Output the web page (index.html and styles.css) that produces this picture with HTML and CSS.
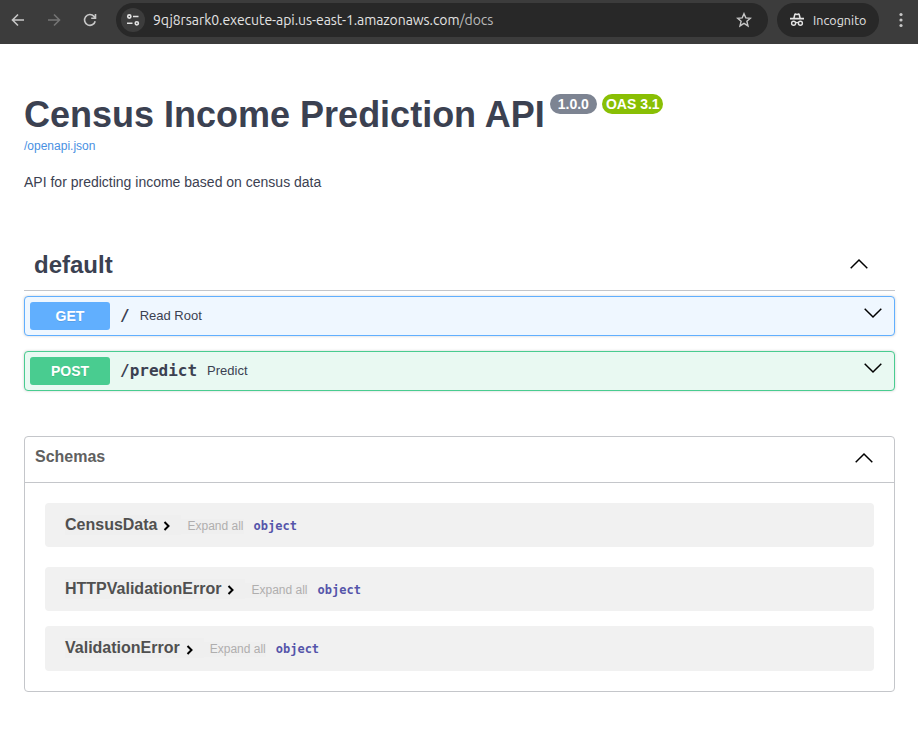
FILE: index.html
```html
<!DOCTYPE html>
<html lang="en">
<head>
<meta charset="utf-8">
<title>Census Income Prediction API</title>
<link rel="stylesheet" href="styles.css">
</head>
<body>
<header class="toolbar">
  <nav class="nav">
    <svg width="16" height="16" viewBox="0 0 16 16" class="stroke"><path d="M14 8H3M8 2.5L2.5 8L8 13.5"/></svg>
    <svg width="16" height="16" viewBox="0 0 16 16" class="stroke dim"><path d="M2 8H13M8 2.5L13.500 8L8 13.5"/></svg>
    <svg width="16" height="16" viewBox="0 0 16 16" class="stroke"><path d="M13.200 9.200A5.400 5.400 0 1 1 12 4.400L13.300 5.800M13.500 2V6.300H9.200"/></svg>
  </nav>
  <div class="address">
    <span class="site-info">
      <svg width="14" height="14" viewBox="0 0 14 14" class="stroke light"><circle cx="3.300" cy="3.500" r="1.600"/><path d="M7 3.500H12.500M1 10.300H6.500"/><circle cx="10.800" cy="10.300" r="1.600"/></svg>
    </span>
    <span class="url"><span class="host">9qj8rsark0.execute-api.us-east-1.amazonaws.com</span>/docs</span>
    <svg width="16" height="16" viewBox="0 0 16 16" class="star"><path d="M8 1.700L9.800 5.900L14.400 6.300L10.900 9.300L12 13.900L8 11.400L4 13.900L5.100 9.300L1.600 6.300L6.200 5.900Z"/></svg>
  </div>
  <div class="incognito">
    <svg width="16" height="16" viewBox="0 0 16 16"><path class="fill" d="M4.200 5.800L5.100 2.200Q5.500 1 6.700 1.300L8 1.700L9.300 1.300Q10.500 1 10.900 2.200L11.800 5.800H15V7.400H1V5.800Z"/><path class="hat" d="M5.800 5.800L6.500 2.900L8 3.300L9.500 2.900L10.200 5.800Z"/><circle cx="4.600" cy="11.200" r="2" class="ring"/><circle cx="11.400" cy="11.200" r="2" class="ring"/><path class="ring" d="M6.600 10.800Q8 10 9.400 10.800"/></svg>
    <span>Incognito</span>
  </div>
  <svg class="dots" width="4" height="16" viewBox="0 0 4 16"><circle cx="2" cy="2.500" r="1.600"/><circle cx="2" cy="8" r="1.600"/><circle cx="2" cy="13.500" r="1.600"/></svg>
</header>
<main>
  <section class="info">
    <div class="title"><h1>Census Income Prediction API</h1><span class="badge version">1.0.0</span><span class="badge oas">OAS 3.1</span></div>
    <a class="spec">/openapi.json</a>
    <p class="description">API for predicting income based on census data</p>
  </section>
  <section>
    <div class="tag"><h2>default</h2><svg class="arrow" width="20" height="20" viewBox="0 0 20 20"><path d="M1.700 14.200L10 6L18.300 14.200"/></svg></div>
    <div class="op get"><span class="method">GET</span><code>/</code><span class="summary">Read Root</span><svg class="arrow" width="20" height="20" viewBox="0 0 20 20"><path d="M1.700 5.800L10 14L18.300 5.800"/></svg></div>
    <div class="op post"><span class="method">POST</span><code>/predict</code><span class="summary">Predict</span><svg class="arrow" width="20" height="20" viewBox="0 0 20 20"><path d="M1.700 5.800L10 14L18.300 5.800"/></svg></div>
  </section>
  <section class="schemas">
    <div class="schemas-head"><h3>Schemas</h3><svg class="arrow" width="20" height="20" viewBox="0 0 20 20"><path d="M1.700 14.200L10 6L18.300 14.200"/></svg></div>
    <div class="models">
      <article class="model"><span class="name"><b>CensusData</b><svg class="chevron" width="8" height="10" viewBox="0 0 8 10"><path d="M1.500 1L5.500 5L1.500 9"/></svg></span><span class="expand">Expand all</span><strong class="type">object</strong></article>
      <article class="model second"><span class="name"><b>HTTPValidationError</b><svg class="chevron" width="8" height="10" viewBox="0 0 8 10"><path d="M1.500 1L5.500 5L1.500 9"/></svg></span><span class="expand">Expand all</span><strong class="type">object</strong></article>
      <article class="model third"><span class="name"><b>ValidationError</b><svg class="chevron" width="8" height="10" viewBox="0 0 8 10"><path d="M1.500 1L5.500 5L1.500 9"/></svg></span><span class="expand">Expand all</span><strong class="type">object</strong></article>
    </div>
  </section>
</main>
</body>
</html>
```
FILE: styles.css
```css
* { box-sizing: border-box; }
body { margin: 0; background: #fff; color: #3b4151; font-family: "Liberation Sans", Arial, sans-serif; overflow: hidden; }
h1, h2, h3, p { margin: 0; }
svg { display: block; flex: none; }

.toolbar { display: flex; align-items: center; height: 44px; padding: 0 15px 4px 10px; background: #3c3c3c; color: #e3e3e3; font-family: Ubuntu, "Noto Sans", sans-serif; }
.nav { display: flex; gap: 20px; width: 106px; }
.stroke { fill: none; stroke: #c7c7c7; stroke-width: 1.6; }
.dim { stroke: #757575; }
.light { stroke: #e3e3e3; }
.address { display: flex; align-items: center; width: 652px; height: 34px; padding: 0 16px 0 5px; border-radius: 17px; background: #282828; }
.site-info { display: grid; place-items: center; width: 24px; height: 24px; margin-right: 8px; border-radius: 50%; background: #3c3c3c; }
.url { flex: 1; font-size: 14px; line-height: 20px; color: #b9b9b9; white-space: nowrap; letter-spacing: -0.06px; }
.host { color: #e3e3e3; }
.star { fill: none; stroke: #c7c7c7; stroke-width: 1.4; }
.incognito { display: flex; align-items: center; gap: 8px; width: 102px; height: 34px; margin-left: 9px; padding-left: 12px; border-radius: 17px; background: #282828; font-size: 12.5px; line-height: 20px; letter-spacing: 0.05px; }
.fill { fill: #e3e3e3; }
.hat { fill: #282828; }
.ring { fill: none; stroke: #e3e3e3; stroke-width: 1.4; }
.dots { margin-left: auto; fill: #c7c7c7; }

main { padding: 50px 23px 0 24px; }
.title { display: flex; align-items: flex-start; height: 44px; }
h1 { margin-right: 5px; font-size: 36px; line-height: 41px; white-space: nowrap; }
.badge { height: 20px; border-radius: 20px; color: #fff; font-size: 14px; font-weight: 700; line-height: 20px; text-align: center; white-space: nowrap; }
.version { width: 47px; margin-right: 5px; background: #7d8492; }
.oas { width: 61px; padding-left: 1px; background: #89bf04; }
.spec { display: block; font-size: 12px; line-height: 16px; color: #4990e2; }
.description { margin-top: 20px; font-size: 14px; line-height: 16px; }

.tag { display: flex; align-items: center; justify-content: space-between; height: 51px; margin: 50px 0 5px; padding: 0 26px 0 10px; border-bottom: 1px solid #c4c6ca; }
h2 { font-size: 24px; line-height: 28px; }
.arrow { fill: none; stroke: #000; stroke-width: 1.5; }
.tag .arrow { margin-bottom: 3px; }
.op { display: flex; align-items: center; height: 40px; margin-bottom: 15px; padding: 0 11px 0 5px; border: 1px solid; border-radius: 4px; box-shadow: 0 0 3px rgba(0, 0, 0, .19); }
.get { border-color: #61affe; background: #eff7ff; }
.post { border-color: #49cc90; background: #e9f9f2; }
.method { width: 80px; height: 28px; border-radius: 3px; color: #fff; font-size: 14px; font-weight: 700; line-height: 28px; text-align: center; text-shadow: 0 1px 0 rgba(0, 0, 0, .1); }
.get .method { background: #61affe; }
.post .method { background: #49cc90; }
.op code { margin: 0 10px; font: 600 16px/20px "DejaVu Sans Mono", monospace; }
.summary { flex: 1; font-size: 13px; line-height: 16px; }
.op .arrow { margin-bottom: 6px; }

.schemas { height: 256px; margin-top: 45px; border: 1px solid #c4c6ca; border-radius: 4px; }
.schemas-head { display: flex; align-items: center; justify-content: space-between; height: 46px; padding: 0 20px 5px 10px; border-bottom: 1px solid #c4c6ca; }
h3 { margin-bottom: 1px; font-size: 16px; line-height: 18px; color: #606060; }
.schemas-head .arrow { margin-top: 1px; }
.models { padding: 20px; }
.model { display: flex; align-items: center; height: 44px; padding: 0 20px; border-radius: 4px; background: #f1f1f1; }
.second { margin-top: 20px; }
.third { margin-top: 15px; height: 45px; }
.name { display: flex; align-items: center; height: 20px; padding-right: 10px; background: #efefef; color: #505050; font-size: 16px; line-height: 20px; }
.third .name { margin-bottom: 1px; }
.third .chevron { margin-top: 3px; }
.chevron { margin: 1px 0 0 6px; fill: none; stroke: #000; stroke-width: 2; }
.expand { margin-top: 2px; padding-left: 6px; background: #efefef; color: #afaeae; font-size: 12px; line-height: 15px; }
.type { margin: 2px 0 0 10px; color: #5555aa; font: 700 12px/15px "DejaVu Sans Mono", monospace; }
```
